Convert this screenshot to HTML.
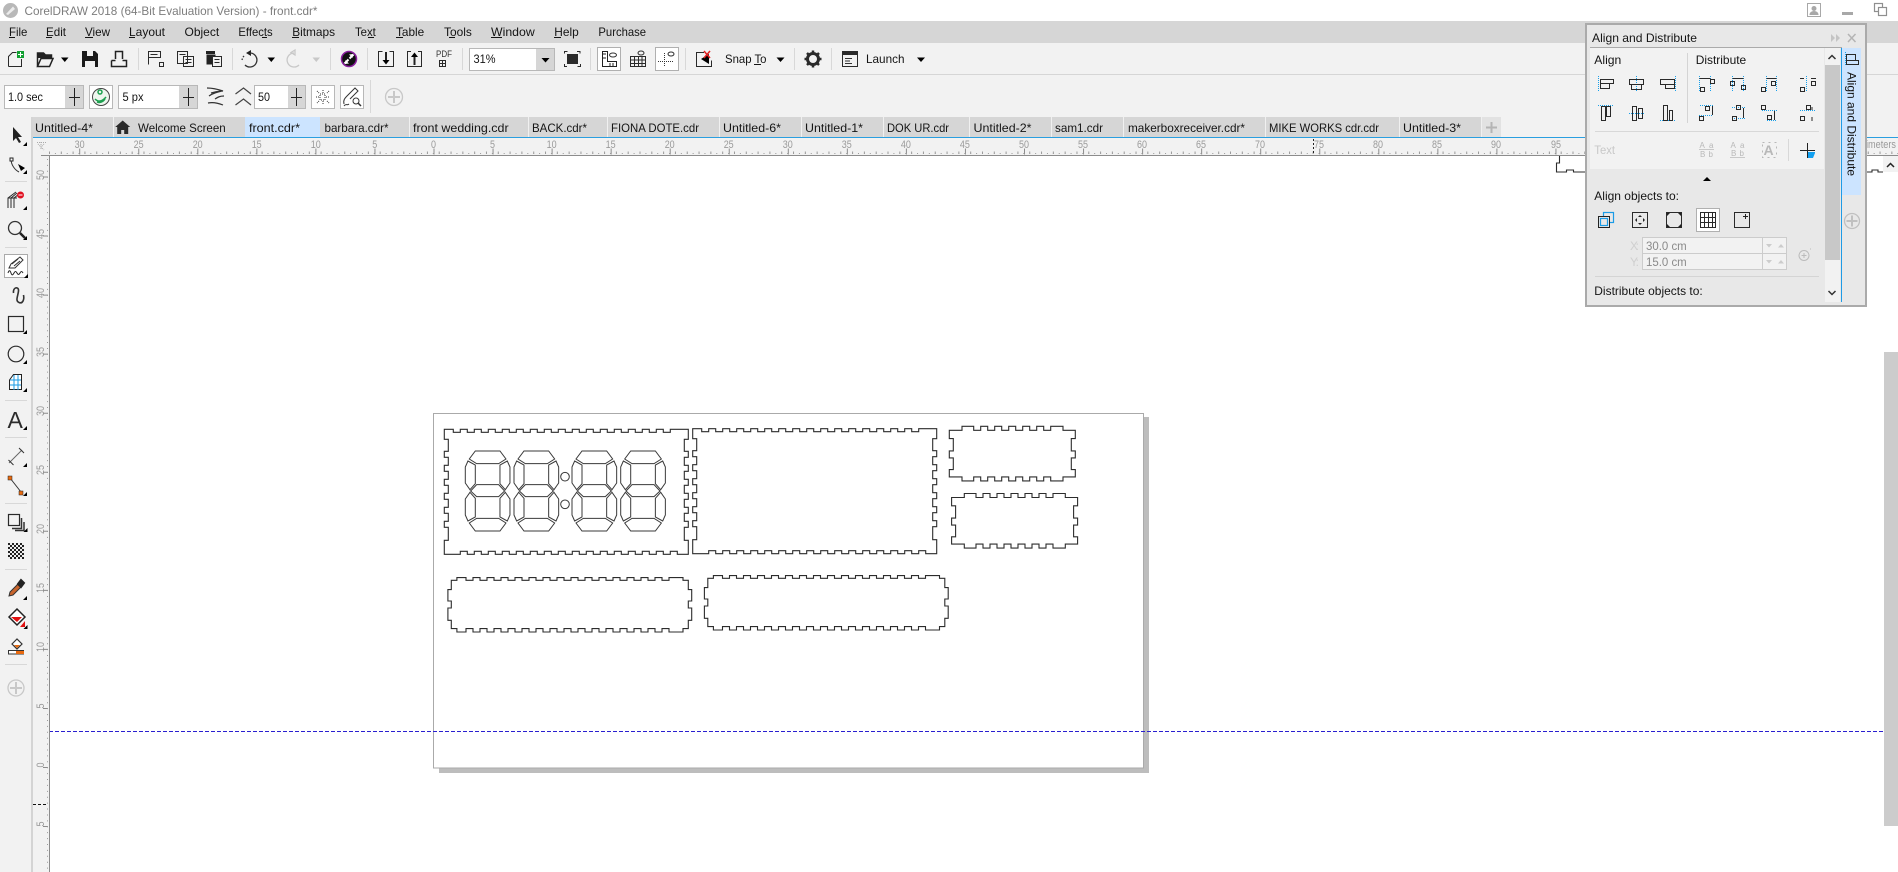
<!DOCTYPE html>
<html><head><meta charset="utf-8"><title>CorelDRAW</title>
<style>
html,body{margin:0;padding:0;background:#fff;overflow:hidden}
svg{display:block;position:absolute;left:0;top:0}
text{font-family:"Liberation Sans",sans-serif;font-size:12px;fill:#141414}
.g{fill:#9a9a9a;font-size:11px}
.k{fill:none;stroke:#2a2a2a;stroke-width:1}
.kk{fill:none;stroke:#222;stroke-width:1.5}
.b{stroke:#1aa0ea;stroke-width:1;stroke-dasharray:1 1;fill:none}
.c{fill:none;stroke:#2c2c2c;stroke-width:1.1}
.x{fill:none;stroke:#3a3a3a;stroke-width:1}
.f{fill:#000}
.l{fill:none;stroke:#bbb;stroke-width:1}
</style></head><body>
<svg width="1898" height="872" viewBox="0 0 1898 872" xmlns="http://www.w3.org/2000/svg">
<defs>
<g id="seg" transform="scale(.3333)" fill="none" stroke="#3a3a3a" stroke-width="3">
<path d="M30 0H104L122 24 100 38H34L12 24Z"/>
<path d="M8 30L30 42V98L14 116 0 96V48Z"/>
<path d="M126 30L104 42V98L120 116 134 96V48Z"/>
<path d="M34 101H100L118 120 100 137H34L16 120Z"/>
<path d="M14 124L30 142V198L8 210 0 192V144Z"/>
<path d="M120 124L104 142V198L126 210 134 192V144Z"/>
<path d="M34 202H100L122 216 104 240H30L12 216Z"/>
</g>
<path id="big" class="c" d="M444.3 429.3h9
v3h7v-3h7v3h7v-3h7v3h7v-3h7v3h7v-3h7
v3h7v-3h7v3h7v-3h7v3h7v-3h7v3h7v-3h7
v3h7v-3h7v3h7v-3h7v3h7v-3h7v3h7v-3h7
v3h7v-3h7v3h7v-3h7v3h7v-3h7v3h7v-3h7
h11v10h-4v12h4v6h-4v8h4v6h-4v8h4v6h-4v8h4v6h-4v8h4v6h-4v8h4v6h-4v13h4v14h-11
v-3h-7v3h-7v-3h-7v3h-7v-3h-7v3h-7v-3h-7v3h-7
v-3h-7v3h-7v-3h-7v3h-7v-3h-7v3h-7v-3h-7v3h-7
v-3h-7v3h-7v-3h-7v3h-7v-3h-7v3h-7v-3h-7v3h-7
v-3h-7v3h-7v-3h-7v3h-7v-3h-7v3h-7v-3h-7v3h-7
h-9v-14h4v-13h-4v-6h4v-8h-4v-6h4v-8h-4v-6h4v-8h-4v-6h4v-8h-4v-6h4v-8h-4v-6h4v-12h-4z"/>
<path id="small" class="c" d="M949.3 430.3h12.7v-4h11.7
v4h7v-4h7v4h7v-4h7v4h7v-4h7v4h7v-4h7v4h7v-4h7
v4h7v-4h12.3v4h12.3v8.3h-4v12.3h4v7h-4v11.7h4v7.3h-12.3v4h-12.3v-4h-7
v4h-7v-4h-7v4h-7v-4h-7v4h-7v-4h-7v4h-7v-4h-7v4h-7v-4h-7
v4h-11.7v-4h-12.7v-7.3h4v-11.7h-4v-7h4v-12.3h-4z"/>
<path id="wide" class="c" d="M451.3 580.3h5.6v-2.7h9.1
v2.7h7v-2.7h7v2.7h7v-2.7h7v2.7h7v-2.7h7v2.7h7v-2.7h7v2.7h7v-2.7h7v2.7h7v-2.7h7v2.7h7v-2.7h7
v2.7h7v-2.7h7v2.7h7v-2.7h7v2.7h7v-2.7h7v2.7h7v-2.7h7v2.7h7v-2.7h7v2.7h7v-2.7h7v2.7h7v-2.7h7
v2.7h7v-2.7h14v2.7h5.3v9.3h3.4v11.4h-3.4v7h3.4v12.3h-3.4v8.3h-5.3v3.4h-14v-3.4h-7
v3.4h-7v-3.4h-7v3.4h-7v-3.4h-7v3.4h-7v-3.4h-7v3.4h-7v-3.4h-7v3.4h-7v-3.4h-7v3.4h-7v-3.4h-7v3.4h-7v-3.4h-7
v3.4h-7v-3.4h-7v3.4h-7v-3.4h-7v3.4h-7v-3.4h-7v3.4h-7v-3.4h-7v3.4h-7v-3.4h-7v3.4h-7v-3.4h-7v3.4h-7v-3.4h-7
v3.4h-9.1v-3.4h-5.6v-8.3h-3.4v-12.3h3.4v-7h-3.4v-11.4h3.4z"/>
</defs>

<!-- base -->
<rect width="1898" height="872" fill="#fff"/>
<rect y="21" width="1898" height="22" fill="#d6d6d6"/>
<rect y="43" width="1898" height="95" fill="#f2f2f2"/>
<rect y="74" width="1898" height="1" fill="#d6d6d6"/>
<rect y="138" width="1898" height="17" fill="#f2f2f2"/>
<rect y="138" width="49" height="734" fill="#f2f2f2"/>
<rect x="0" y="117" width="32" height="755" fill="#f2f2f2"/>
<rect x="31" y="117" width="2" height="755" fill="#d4d4d4"/>

<!-- title bar -->
<circle cx="10.5" cy="10.5" r="7.5" fill="#b8b8b8"/><path d="M6 14L13 6.5 15 9 8 15z" fill="#ececec"/>
<text x="24.5" y="15" textLength="293" lengthAdjust="spacingAndGlyphs" style="fill:#7d7d7d">CorelDRAW 2018 (64-Bit Evaluation Version) - front.cdr*</text>
<g fill="none" stroke="#a8a8a8"><rect x="1807.5" y="3.5" width="13" height="13"/><circle cx="1814" cy="8.5" r="2" fill="#a8a8a8"/><path d="M1810 14.5c0-4 8-4 8 0z" fill="#a8a8a8"/></g>
<rect x="1842" y="12" width="11" height="3" fill="#a8a8a8"/>
<g fill="#fff" stroke="#8f8f8f" stroke-width="1.2"><rect x="1874.5" y="3.5" width="8" height="8"/><rect x="1878.5" y="7.5" width="8" height="8"/></g>

<!-- menu -->
<g>
<text x="9" y="36" textLength="18.4" lengthAdjust="spacingAndGlyphs">File</text>
<text x="46" y="36" textLength="20" lengthAdjust="spacingAndGlyphs">Edit</text>
<text x="85" y="36" textLength="25" lengthAdjust="spacingAndGlyphs">View</text>
<text x="129" y="36" textLength="36" lengthAdjust="spacingAndGlyphs">Layout</text>
<text x="184.5" y="36" textLength="34.7" lengthAdjust="spacingAndGlyphs">Object</text>
<text x="238.4" y="36" textLength="34.3" lengthAdjust="spacingAndGlyphs">Effects</text>
<text x="292.2" y="36" textLength="42.9" lengthAdjust="spacingAndGlyphs">Bitmaps</text>
<text x="355" y="36" textLength="20.8" lengthAdjust="spacingAndGlyphs">Text</text>
<text x="396" y="36" textLength="28.2" lengthAdjust="spacingAndGlyphs">Table</text>
<text x="444" y="36" textLength="27.8" lengthAdjust="spacingAndGlyphs">Tools</text>
<text x="491" y="36" textLength="43.7" lengthAdjust="spacingAndGlyphs">Window</text>
<text x="554.3" y="36" textLength="24.5" lengthAdjust="spacingAndGlyphs">Help</text>
<text x="598.4" y="36" textLength="47.7" lengthAdjust="spacingAndGlyphs">Purchase</text>
<path d="M9 37.5h6M46 37.5h6M85 37.5h8M129 37.5h6M262 37.5h5M292 37.5h7M368 37.5h6M396 37.5h7M449 37.5h6M491 37.5h11M554 37.5h7" stroke="#141414" fill="none"/>
</g>

<!-- toolbar 1 -->
<g>
<path class="k" d="M8.5 66.5V56.5l4-4h4M21.5 59v7.5h-13"/><rect x="17" y="51" width="7" height="7" fill="#12a032"/><path d="M20.5 52v5M18 54.5h5" stroke="#fff"/>
<path class="kk" d="M37.5 66.5V53h6l2 2h6v3M37.5 66.5h12l3.5-8H41z"/><path d="M38 53h6l2 2h5v3H38z" fill="#222"/>
<path class="f" d="M61 57.5h7.5l-3.7 4.500z"/>
<path d="M82 51h13l3 3v13H82z" fill="#1b1b1b"/><rect x="87" y="51" width="6" height="5" fill="#f2f2f2"/><rect x="85" y="61" width="10" height="6" fill="#f2f2f2"/>
<path class="kk" d="M115.500 59V51.500h7V59M111.500 60.500h4M122.500 60.500h4V66.500h-15v-6"/>
<rect x="138" y="48" width="1" height="22" fill="#d8d8d8"/>
<path class="k" d="M148.500 64.500v-13h12v6h-12M150.500 54.500h7"/><rect x="159.500" y="62.500" width="4" height="4" class="k"/>
<path class="k" d="M177.500 51.500h10v12h-10zM183.500 56.500h10v10h-10zM179.500 54.500h6M185.500 59.500h6M185.500 62.500h6"/>
<path d="M206 51h9v3h-9z" fill="#222"/><path d="M206.500 54.500h9v10h-9z" fill="#222"/><path class="k" d="M212.500 56.500h9v10h-9zM214.500 59.500h5M214.500 62.500h5" style="fill:#f2f2f2"/>
<rect x="232" y="48" width="1" height="22" fill="#d8d8d8"/>
<path d="M251 50l-5 3 5 3z" fill="#222"/><path d="M250 53a7 7 0 1 1-5 12" fill="none" stroke="#333" stroke-width="1.300"/><path d="M244 56a7 7 0 0 0-2 5" stroke="#333" stroke-dasharray="1.500 1.500" fill="none" stroke-width="1.300"/>
<path class="f" d="M267.500 57.500h7.500l-3.700 4.500z"/>
<path d="M295 50v5l-4-2.500zM294 53a7 7 0 1 0 5 12" fill="none" stroke="#c8c8c8" stroke-width="1.300"/>
<path d="M312.500 57.500h7.500l-3.700 4.500z" fill="#c8c8c8"/>
<rect x="330" y="48" width="1" height="22" fill="#d8d8d8"/>
<circle cx="349" cy="59" r="7.500" fill="#111" stroke="#8a1f9e" stroke-width="1.500"/><path d="M344.500 63.500l4-4M349.500 58.500l4-4" stroke="#fff" stroke-width="2"/><path d="M353 54l-.5 4-3.500-3.500zM345 64l.5-4 3.500 3.500z" fill="#fff"/>
<rect x="367" y="48" width="1" height="22" fill="#d8d8d8"/>
<path class="k" d="M382.500 51.500h-4v15h15v-15h-4"/><path d="M386 52v10" stroke="#222" stroke-width="2"/><path d="M382.500 60h7l-3.500 4.500z" class="f"/>
<path class="k" d="M411 51.500h-3.500v15h14v-15H418"/><path d="M414.500 55v10" stroke="#222" stroke-width="2"/><path d="M411 57h7l-3.500-4.500z" class="f"/>
<text x="436" y="57" textLength="16" lengthAdjust="spacingAndGlyphs" style="font-size:9px;fill:#333">PDF</text><path class="k" d="M439.500 60.500h6v6h-6zM442.500 60.500v6M439.500 63.500h6"/>
<rect x="462" y="48" width="1" height="22" fill="#d8d8d8"/>
<rect x="469.500" y="48.500" width="85" height="22" fill="#fff" stroke="#b8b8b8"/>
<rect x="536" y="49" width="18" height="21" fill="#d6d6d6"/>
<path class="f" d="M541.500 58h8l-4 4.500z"/>
<text x="473.500" y="63" textLength="22" lengthAdjust="spacingAndGlyphs">31%</text>
<path class="k" d="M564.500 53.500v-2h3M577 51.500h3v2M580.500 64v2.500h-3M567 66.500h-2.500V64"/><rect x="567" y="54" width="11" height="10" fill="#2a2a2a"/>
<rect x="590" y="48" width="1" height="22" fill="#d8d8d8"/>
<rect x="597.500" y="47.500" width="23" height="23" fill="#fff" stroke="#b0b0b0"/>
<path class="kk" style="stroke-width:1" d="M602.500 51.500v15h14v-5h-9v-10z"/><path d="M610 63v3M613 63v3M603 54h3M603 58h3" stroke="#222" fill="none"/><ellipse cx="613" cy="55" rx="3.500" ry="2" fill="none" stroke="#333"/>
<ellipse cx="641" cy="53" rx="3" ry="2" fill="none" stroke="#333"/>
<path class="k" d="M630.500 56.500h15v10h-15zM634.500 56.500v10M638.500 56.500v10M642 56.500v10M630.500 60h15M630.500 63.500h15"/>
<rect x="655.500" y="47.500" width="23" height="23" fill="#fff" stroke="#b0b0b0"/>
<path d="M664.500 53v14M658 61.500h15" stroke="#333" stroke-dasharray="1 1" fill="none"/><ellipse cx="671" cy="54" rx="3" ry="2" fill="none" stroke="#333"/>
<rect x="685" y="48" width="1" height="22" fill="#d8d8d8"/>
<path class="k" d="M704 52.500h-7.500v14h15v-6"/><path class="f" d="M709 54v10l-8-5z"/><path d="M703 52l6 7M709 52l-6 7" stroke="#e02020" stroke-width="1.500" transform="translate(1 -1)"/>
<text x="725" y="63" textLength="41.500" lengthAdjust="spacingAndGlyphs">Snap To</text><path d="M754 64.500h7" stroke="#141414"/>
<path class="f" d="M776.500 57.500h8l-4 4.500z"/>
<rect x="794" y="48" width="1" height="22" fill="#d8d8d8"/>
<circle cx="813" cy="59" r="5.500" fill="none" stroke="#2a2a2a" stroke-width="3"/><path d="M813 50.500v3M813 64.500v3M804.500 59h3M818.500 59h3M807 53l2 2M817 63l2 2M819 53l-2 2M809 63l-2 2" stroke="#2a2a2a" stroke-width="2.500"/>
<rect x="831" y="48" width="1" height="22" fill="#d8d8d8"/>
<rect x="842.500" y="51.500" width="15" height="15" class="k"/><rect x="843" y="52" width="14" height="3" fill="#2a2a2a"/><path d="M845 58.500h7M845 61h5M845 63.500h7" stroke="#333"/>
<text x="866" y="63" textLength="38.500" lengthAdjust="spacingAndGlyphs">Launch</text>
<path class="f" d="M917 57.500h8l-4 4.500z"/>
</g>

<!-- toolbar 2 -->
<g>
<rect x="4.500" y="85.500" width="79" height="23" fill="#fff" stroke="#b8b8b8"/><rect x="65" y="86" width="18" height="22" fill="#d6d6d6"/>
<path d="M74.500 88v18M69 97.500h11" stroke="#222"/>
<text x="8" y="101" textLength="35" lengthAdjust="spacingAndGlyphs">1.0 sec</text>
<rect x="89.500" y="85.500" width="23" height="23" fill="#fff" stroke="#b8b8b8"/>
<circle cx="101" cy="97" r="8.500" fill="#eef6ee" stroke="#444"/><path d="M95 99c3 3 7 3 11-2M97 102c3 1 6 0 8-3" stroke="#1ea050" fill="none" stroke-width="1.500"/><circle cx="100" cy="92" r="2" fill="none" stroke="#1ea050" stroke-width="1.500"/>
<rect x="118.500" y="85.500" width="79" height="23" fill="#fff" stroke="#b8b8b8"/><rect x="179" y="86" width="18" height="22" fill="#d6d6d6"/>
<path d="M188.500 88v18M183 97.500h11" stroke="#222"/>
<text x="122.500" y="101" textLength="21" lengthAdjust="spacingAndGlyphs">5 px</text>
<path d="M207 88c5 0 10 1 16 3-5 0-8 1-12 2M222 91c-5 1-9 2-13 5M224 96c-4 0-6 1-9 3M208 103c5-1 10 0 15 2" fill="none" stroke="#333" stroke-width="1.200"/>
<path d="M235.500 94l8-6 7.500 6M235.500 105l8-6 7.500 6" fill="none" stroke="#444" stroke-width="1.200"/>
<rect x="254.500" y="85.500" width="51" height="23" fill="#fff" stroke="#b8b8b8"/><rect x="288" y="86" width="17" height="22" fill="#d6d6d6"/>
<path d="M296.500 88v18M291 97.500h11" stroke="#222"/>
<text x="258" y="101" textLength="12" lengthAdjust="spacingAndGlyphs">50</text>
<rect x="311.500" y="85.500" width="23" height="23" fill="#fff" stroke="#b8b8b8"/>
<path d="M316 97h3M326 97h3M323 90v3M323 101v3M317 91l2 2M327 101l2 2M329 91l-2 2M319 101l-2 2M320 94h5v6h-5z" stroke="#333" stroke-dasharray="1 1" fill="none"/>
<rect x="340.500" y="85.500" width="23" height="23" fill="#fff" stroke="#b8b8b8"/>
<path d="M344 104c-1-4 1-6 3-8l8-8 3 3-8 8" fill="none" stroke="#333"/><path d="M344 106c2-3 3 0 5-2" fill="none" stroke="#333"/><circle cx="356" cy="101" r="3" fill="none" stroke="#333"/><path d="M358 103l3 3" stroke="#333" stroke-width="1.500"/>
<rect x="370" y="80" width="1" height="33" fill="#d8d8d8"/>
<circle cx="394" cy="97" r="8.500" fill="none" stroke="#c8c8c8" stroke-width="1.300"/><path d="M394 91v12M388 97h12" stroke="#c8c8c8" stroke-width="2"/>
</g>

<!-- tabs -->
<g>
<rect x="33" y="117" width="1448" height="20" fill="#d6d6d6"/>
<rect x="245" y="117" width="75" height="20" fill="#cce4ff"/>
<rect x="1482" y="117" width="19" height="20" fill="#e2e2e2"/>
<path d="M113.500 117v20M528.500 117v20M607.500 117v20M719.500 117v20M801.500 117v20M883.500 117v20M969.500 117v20M1051.500 117v20M1123.500 117v20M1265.500 117v20M1399.500 117v20M1481.500 117v20M409.500 117v20" stroke="#f0f0f0" fill="none"/>
<path d="M1491.500 122v11M1486 127.500h11" stroke="#b4b4b4" stroke-width="2"/>
<path d="M122.700 120.500l-7.500 6.500h2v7h4v-4h3v4h4v-7h2z" fill="#2a2a2a"/>
<text x="35" y="132" textLength="58" lengthAdjust="spacingAndGlyphs">Untitled-4*</text>
<text x="138" y="132" textLength="87.700" lengthAdjust="spacingAndGlyphs">Welcome Screen</text>
<text x="249" y="132" textLength="51" lengthAdjust="spacingAndGlyphs">front.cdr*</text>
<text x="324.500" y="132" textLength="64" lengthAdjust="spacingAndGlyphs">barbara.cdr*</text>
<text x="413" y="132" textLength="95.600" lengthAdjust="spacingAndGlyphs">front wedding.cdr</text>
<text x="532" y="132" textLength="55" lengthAdjust="spacingAndGlyphs">BACK.cdr*</text>
<text x="611" y="132" textLength="88" lengthAdjust="spacingAndGlyphs">FIONA DOTE.cdr</text>
<text x="723" y="132" textLength="58" lengthAdjust="spacingAndGlyphs">Untitled-6*</text>
<text x="805" y="132" textLength="58" lengthAdjust="spacingAndGlyphs">Untitled-1*</text>
<text x="887" y="132" textLength="62" lengthAdjust="spacingAndGlyphs">DOK UR.cdr</text>
<text x="973.500" y="132" textLength="58" lengthAdjust="spacingAndGlyphs">Untitled-2*</text>
<text x="1055" y="132" textLength="48" lengthAdjust="spacingAndGlyphs">sam1.cdr</text>
<text x="1128" y="132" textLength="117" lengthAdjust="spacingAndGlyphs">makerboxreceiver.cdr*</text>
<text x="1269" y="132" textLength="110" lengthAdjust="spacingAndGlyphs">MIKE WORKS cdr.cdr</text>
<text x="1403" y="132" textLength="58" lengthAdjust="spacingAndGlyphs">Untitled-3*</text>
<rect x="33" y="137" width="1865" height="1" fill="#2a9fe0"/>
</g>

<!-- canvas contents first -->
<rect x="49" y="155" width="1849" height="717" fill="#fff"/>
<rect x="439" y="768" width="710" height="5" fill="#bdbdbd"/>
<rect x="1143.500" y="417" width="5.500" height="356" fill="#bdbdbd"/>
<rect x="433.500" y="413.500" width="710" height="354.500" fill="#fff" stroke="#aaa"/>
<path d="M49 731.500H1883" stroke="#2a1fd0" stroke-dasharray="4 2" fill="none"/>

<use href="#big"/>
<use href="#big" x="248.400" y="-.6"/>
<use href="#small"/>
<use href="#small" x="2.300" y="67.200"/>
<use href="#wide"/>
<use href="#wide" x="256.500" y="-2"/>
<g>
<use href="#seg" x="465.300" y="451"/>
<use href="#seg" x="514" y="451"/>
<use href="#seg" x="572" y="451"/>
<use href="#seg" x="620.700" y="451"/>
</g>
<circle cx="565" cy="476.700" r="4.300" class="x"/><circle cx="565" cy="504.300" r="4.300" class="x"/>
<path d="M1559.500 155v8h-3v9h10v-2h7v2h12M1866 172h6v-2h6v2h5" class="c"/>

<!-- right scrollbar -->
<rect x="1883" y="155" width="15" height="17" fill="#f2f2f2"/>
<path d="M1887 167l3.500-3.500 3.500 3.500" fill="none" stroke="#222" stroke-width="1.500"/>
<rect x="1884" y="352" width="14" height="474" fill="#ccc"/>

<!-- h ruler -->
<g text-anchor="middle">
<text class="g" x="79.600" y="148" textLength="10" lengthAdjust="spacingAndGlyphs">30</text>
<text class="g" x="138.600" y="148" textLength="10" lengthAdjust="spacingAndGlyphs">25</text>
<text class="g" x="197.700" y="148" textLength="10" lengthAdjust="spacingAndGlyphs">20</text>
<text class="g" x="256.700" y="148" textLength="10" lengthAdjust="spacingAndGlyphs">15</text>
<text class="g" x="315.800" y="148" textLength="10" lengthAdjust="spacingAndGlyphs">10</text>
<text class="g" x="374.800" y="148" textLength="5" lengthAdjust="spacingAndGlyphs">5</text>
<text class="g" x="433.500" y="148" textLength="5" lengthAdjust="spacingAndGlyphs">0</text>
<text class="g" x="492.500" y="148" textLength="5" lengthAdjust="spacingAndGlyphs">5</text>
<text class="g" x="551.600" y="148" textLength="10" lengthAdjust="spacingAndGlyphs">10</text>
<text class="g" x="610.600" y="148" textLength="10" lengthAdjust="spacingAndGlyphs">15</text>
<text class="g" x="669.700" y="148" textLength="10" lengthAdjust="spacingAndGlyphs">20</text>
<text class="g" x="728.700" y="148" textLength="10" lengthAdjust="spacingAndGlyphs">25</text>
<text class="g" x="787.800" y="148" textLength="10" lengthAdjust="spacingAndGlyphs">30</text>
<text class="g" x="846.800" y="148" textLength="10" lengthAdjust="spacingAndGlyphs">35</text>
<text class="g" x="905.900" y="148" textLength="10" lengthAdjust="spacingAndGlyphs">40</text>
<text class="g" x="964.900" y="148" textLength="10" lengthAdjust="spacingAndGlyphs">45</text>
<text class="g" x="1024" y="148" textLength="10" lengthAdjust="spacingAndGlyphs">50</text>
<text class="g" x="1083" y="148" textLength="10" lengthAdjust="spacingAndGlyphs">55</text>
<text class="g" x="1142" y="148" textLength="10" lengthAdjust="spacingAndGlyphs">60</text>
<text class="g" x="1201" y="148" textLength="10" lengthAdjust="spacingAndGlyphs">65</text>
<text class="g" x="1260" y="148" textLength="10" lengthAdjust="spacingAndGlyphs">70</text>
<text class="g" x="1319" y="148" textLength="10" lengthAdjust="spacingAndGlyphs">75</text>
<text class="g" x="1378" y="148" textLength="10" lengthAdjust="spacingAndGlyphs">80</text>
<text class="g" x="1437" y="148" textLength="10" lengthAdjust="spacingAndGlyphs">85</text>
<text class="g" x="1496" y="148" textLength="10" lengthAdjust="spacingAndGlyphs">90</text>
<text class="g" x="1556" y="148" textLength="10" lengthAdjust="spacingAndGlyphs">95</text>
</g>
<text class="g" x="1866" y="148" textLength="30" lengthAdjust="spacingAndGlyphs">imeters</text>
<path d="M79.200 151.500H1898" stroke="#8c8c8c" stroke-width="6" stroke-dasharray="1 58.050" fill="none"/>
<path d="M49 153.500H1898" stroke="#9a9a9a" stroke-width="1" stroke-dasharray="1 4.905" fill="none"/>
<path d="M49 152.500H1898" stroke="#9a9a9a" stroke-width="2" stroke-dasharray="1 10.810" fill="none"/>
<path d="M1313.500 139v16" stroke="#222" stroke-dasharray="2 2" fill="none"/>
<rect x="41" y="155" width="1857" height="1" fill="#8c8c8c"/>

<!-- v ruler -->
<rect x="49" y="155" width="1" height="717" fill="#8c8c8c"/>
<g text-anchor="middle">
<text class="g" transform="translate(44 175) rotate(-90)" textLength="10" lengthAdjust="spacingAndGlyphs">50</text>
<text class="g" transform="translate(44 234) rotate(-90)" textLength="10" lengthAdjust="spacingAndGlyphs">45</text>
<text class="g" transform="translate(44 293) rotate(-90)" textLength="10" lengthAdjust="spacingAndGlyphs">40</text>
<text class="g" transform="translate(44 352) rotate(-90)" textLength="10" lengthAdjust="spacingAndGlyphs">35</text>
<text class="g" transform="translate(44 411) rotate(-90)" textLength="10" lengthAdjust="spacingAndGlyphs">30</text>
<text class="g" transform="translate(44 470) rotate(-90)" textLength="10" lengthAdjust="spacingAndGlyphs">25</text>
<text class="g" transform="translate(44 529) rotate(-90)" textLength="10" lengthAdjust="spacingAndGlyphs">20</text>
<text class="g" transform="translate(44 588) rotate(-90)" textLength="10" lengthAdjust="spacingAndGlyphs">15</text>
<text class="g" transform="translate(44 647) rotate(-90)" textLength="10" lengthAdjust="spacingAndGlyphs">10</text>
<text class="g" transform="translate(44 706) rotate(-90)" textLength="5" lengthAdjust="spacingAndGlyphs">5</text>
<text class="g" transform="translate(44 765) rotate(-90)" textLength="5" lengthAdjust="spacingAndGlyphs">0</text>
<text class="g" transform="translate(44 824) rotate(-90)" textLength="5" lengthAdjust="spacingAndGlyphs">5</text>
</g>
<path d="M45.500 176.500V872" stroke="#8c8c8c" stroke-width="5" stroke-dasharray="1 58.050" fill="none"/>
<path d="M47.500 159V872" stroke="#9a9a9a" stroke-dasharray="1 4.905" fill="none"/>
<path d="M33 804.500h15" stroke="#111" stroke-dasharray="3 2" fill="none"/>
<path d="M37 142.500h9M41 142v8M38 144l6 6M44 144l-3 3" stroke="#aaa" stroke-dasharray="1 1" fill="none"/>

<!-- toolbox -->
<g>
<path d="M13 127v14l3-3 3 5 2-1-3-5h4z" fill="#222"/><path class="f" d="M27 142v4h-4z"/>
<path d="M11 159c0 6 4 11 8 13" fill="none" stroke="#333"/><rect x="10" y="158" width="3" height="3" fill="#fff" stroke="#222"/><path class="f" d="M18 164l7 4-4 3z"/><path class="f" d="M27 170v4h-4z"/>
<rect x="5" y="181" width="22" height="1" fill="#d8d8d8"/>
<path class="k" d="M8 208v-10l8-6M11 208v-10l6-5M14 208v-10l5-4M8 198h9"/><circle cx="20.500" cy="195" r="3.500" fill="#e01020"/><path d="M18.500 195h4" stroke="#fff"/><path class="f" d="M27 206v4h-4z"/>
<circle cx="15" cy="228" r="6.500" fill="none" stroke="#333" stroke-width="1.300"/><path d="M20 233l5 5" stroke="#222" stroke-width="2.500"/><path class="f" d="M27 236v4h-4z"/>
<rect x="5" y="247" width="22" height="1" fill="#d8d8d8"/>
<rect x="4.500" y="254.500" width="23" height="23" fill="#fff" stroke="#aaa"/>
<path d="M9 268l2-4 9-7 3 3-8 8z" fill="none" stroke="#333"/><path d="M12 264l6-5M14 266l6-5" stroke="#333"/><path d="M8 273c1-3 2-3 3 0s2 2 3 0 2-2 3 0 2 2 3 0 2-2 3 0" fill="none" stroke="#222"/><path class="f" d="M28 274v4h-4z"/>
<path d="M13.500 293C12.500 287 19 286 18.500 291C18 296 15 301 19 302.500C22.500 304 24.500 300 23.500 295" fill="none" stroke="#333" stroke-width="1.600"/>
<rect x="8.500" y="316.500" width="15" height="15" class="k" style="stroke-width:1.200"/><path class="f" d="M27 330v4h-4z"/>
<circle cx="16" cy="354" r="7.800" class="k" style="stroke-width:1.200"/><path class="f" d="M27 360v4h-4z"/>
<path d="M9.500 380l4-5.500h8v15h-12z" fill="#fff" stroke="#222"/><path d="M10 380h11M10 385h11M14 375v15M18 375v15" stroke="#1a9be6"/><path class="f" d="M27 388v4h-4z"/>
<rect x="5" y="400" width="22" height="1" fill="#d8d8d8"/>
<text x="7.500" y="428" style="font-size:23px;fill:#2c2c2c">A</text><path class="f" d="M27 426v4h-4z"/>
<rect x="5" y="437" width="22" height="1" fill="#d8d8d8"/>
<path d="M9 463l13-13" stroke="#666"/><path d="M8.500 460l5 5M19 448l5 5" stroke="#333"/><path class="f" d="M27 463v4h-4z"/>
<path d="M10 478l11 14" stroke="#333"/><rect x="8" y="476" width="4" height="4" fill="#e86a10" stroke="#222" stroke-width=".5"/><rect x="19" y="491" width="4" height="4" fill="#e86a10" stroke="#222" stroke-width=".5"/><path class="f" d="M27 492v4h-4z"/>
<rect x="5" y="503" width="22" height="1" fill="#d8d8d8"/>
<rect x="8.500" y="514.500" width="11" height="11" class="k" style="stroke-width:1.200"/><path d="M21.500 518v10.500H12M24 522v8.500h-9" fill="none" stroke="#333" stroke-width="1.500"/><path class="f" d="M27.500 528v4h-4z"/>
<rect x="8" y="543" width="16" height="16" fill="#222"/>
<path d="M10 543h2v2h-2zM14 543h2v2h-2zM18 543h2v2h-2zM22 543h2v2h-2zM8 545h2v2H8zM12 545h2v2h-2zM16 545h2v2h-2zM20 545h2v2h-2zM10 547h2v2h-2zM14 547h2v2h-2zM18 547h2v2h-2zM22 547h2v2h-2zM8 549h2v2H8zM12 549h2v2h-2zM16 549h2v2h-2zM20 549h2v2h-2zM10 551h2v2h-2zM14 551h2v2h-2zM18 551h2v2h-2zM22 551h2v2h-2zM8 553h2v2H8zM12 553h2v2h-2zM16 553h2v2h-2zM20 553h2v2h-2zM10 555h2v2h-2zM14 555h2v2h-2zM18 555h2v2h-2zM22 555h2v2h-2zM8 557h2v2H8zM12 557h2v2h-2zM16 557h2v2h-2zM20 557h2v2h-2z" fill="#eee"/>
<rect x="5" y="569" width="22" height="1" fill="#d8d8d8"/>
<path d="M9 596l1-4 9-9 3 3-9 9z" fill="#c8642c" stroke="#333"/><path d="M18 584l3-4 3 3-3 4z" fill="#222" stroke="#222" stroke-width="2"/><path class="f" d="M27 596v4h-4z"/>
<path d="M9 617l8-8 8 8-8 8z" fill="#fff" stroke="#222" stroke-width="1.500"/><path d="M11 617h11l-5 5z" fill="#e01010"/><path d="M20 627l5-6v6z" fill="#e01010"/><path class="f" d="M27.500 625v4h-4z"/>
<path d="M12 644l5-5 5 5-5 5z" fill="#fff" stroke="#333" stroke-width="1.200"/><path d="M14 645h6l-3 3z" fill="#e86a10"/><rect x="8.500" y="650.500" width="15" height="3.500" fill="#fff" stroke="#333"/><rect x="16" y="651" width="8" height="3" fill="#e86a10"/>
<rect x="5" y="664" width="22" height="1" fill="#d8d8d8"/>
<circle cx="16" cy="688" r="8" fill="none" stroke="#c8c8c8" stroke-width="1.300"/><path d="M16 682v12M10 688h12" stroke="#c8c8c8" stroke-width="2"/>
</g>

<!-- docker panel -->
<g>
<rect x="1586" y="24" width="280" height="282" fill="#e8e8e8" stroke="#aaa" stroke-width="2"/>
<text x="1592" y="42" textLength="105" lengthAdjust="spacingAndGlyphs">Align and Distribute</text>
<path d="M1831 34v8l4-4zM1836 34v8l4-4z" fill="#c4c4c4"/>
<path d="M1848 34l7.500 8M1855.500 34l-7.500 8" stroke="#b4b4b4" stroke-width="1.500"/>
<rect x="1590" y="47" width="252" height="1" fill="#aaa"/>
<rect x="1590" y="48" width="234" height="121" fill="#f2f2f2"/>
<rect x="1825" y="48" width="15" height="254" fill="#f2f2f2"/>
<rect x="1825" y="65" width="15" height="195" fill="#c8c8c8"/>
<path d="M1828.500 59l3.500-3.500 3.500 3.500" fill="none" stroke="#333" stroke-width="1.500"/>
<path d="M1828.500 291l3.500 3.500 3.500-3.500" fill="none" stroke="#333" stroke-width="1.500"/>
<rect x="1841" y="48" width="1" height="254" fill="#1f9be6"/>
<rect x="1842" y="48" width="19" height="147" fill="#cce4ff"/>
<path d="M1846.500 54.500h9v6h-9zM1846.500 60.500h12v4h-12z" class="k"/><path d="M1845.500 52v14" class="b"/>
<text transform="translate(1847.500 72) rotate(90)" textLength="104" lengthAdjust="spacingAndGlyphs">Align and Distribute</text>
<circle cx="1852" cy="221" r="7.500" fill="none" stroke="#c0c0c0" stroke-width="1.300"/><path d="M1852 215.500v11M1846.500 221h11" stroke="#c0c0c0" stroke-width="2"/>

<text x="1594.300" y="64" textLength="27" lengthAdjust="spacingAndGlyphs">Align</text>
<text x="1695.700" y="64" textLength="50.500" lengthAdjust="spacingAndGlyphs">Distribute</text>
<rect x="1687" y="53" width="1" height="70" fill="#d4d4d4"/>

<path class="b" d="M1598.500 76v16M1636.500 76v16M1675.500 76v16M1598 105.500h16M1629 113.500h16M1660 120.500h16"/>
<path class="k" d="M1600.500 79.500h13v4h-13zM1600.500 83.500h9v5h-9zM1629.500 79.500h14v5h-14zM1631.500 84.500h10v5h-10zM1660.500 79.500h14v5h-14zM1665.500 84.500h9v4h-9zM1601.500 106.500h4v14h-4zM1606.500 106.500h4v10h-4zM1632.500 106.500h4v14h-4zM1638.500 108.500h4v10h-4zM1663.500 105.500h4v15h-4zM1669.500 110.500h3v10h-3z"/>
<path class="b" d="M1699.500 76v16M1710.500 76v16M1732.500 76v16M1743.500 76v16M1766.500 76v16M1776.500 76v16M1806.500 76v16"/>
<path class="k" d="M1699.500 78.500h11M1732.500 78.500h11M1766.500 78.500h10M1800 78.500h4M1811 78.500h5"/>
<path class="k" d="M1710.500 79.500h4v4h-4zM1700.500 87.500h4v4h-4zM1730.500 81.500h4v4h-4zM1741.500 85.500h4v4h-4zM1771.500 81.500h4v4h-4zM1761.500 87.500h4v4h-4zM1811.500 81.500h4v4h-4zM1800.500 87.500h4v4h-4z"/>
<path class="b" d="M1700 105.500h14M1699 115.500h14M1732 107.500h13M1732 118.500h13M1762 110.500h15M1767 120.500h10M1800 110.500h16"/>
<path class="k" d="M1712.500 106v9M1743.500 108v10M1774.500 111v9M1812 107v3M1812 117v4M1800 116.500h4"/>
<path class="k" d="M1705.500 106.500h4v4h-4zM1699.500 116.500h4v4h-4zM1736.500 105.500h4v4h-4zM1732.500 116.500h4v4h-4zM1761.500 105.500h4v4h-4zM1767.500 115.500h4v4h-4zM1806.500 105.500h4v4h-4zM1800.500 116.500h4v4h-4z"/>

<rect x="1595" y="131" width="224" height="1" fill="#d8d8d8"/>
<text x="1594.300" y="154" textLength="20.700" lengthAdjust="spacingAndGlyphs" style="fill:#c8c8c8">Text</text>
<text x="1699.500" y="148" textLength="14" style="font-size:8px;fill:#b8b8b8">Aa</text><text x="1700" y="157" textLength="13" style="font-size:8px;fill:#b8b8b8">Bb</text><rect x="1699" y="149" width="15" height="1" fill="#c8c8c8"/>
<text x="1730.500" y="148" textLength="14" style="font-size:8px;fill:#b8b8b8">Aa</text><text x="1731" y="156" textLength="13" style="font-size:8px;fill:#b8b8b8">Bb</text><rect x="1730" y="157" width="15" height="1" fill="#c8c8c8"/>
<text x="1763.500" y="155" style="font-size:14px;font-weight:bold;fill:#b8b8b8">A</text>
<rect x="1762.500" y="142.500" width="14" height="15" fill="none" stroke="#b8b8b8" stroke-dasharray="2 4"/>
<rect x="1788" y="139" width="1" height="22" fill="#d8d8d8"/>
<path d="M1807.500 143v15M1800 150.500h15" stroke="#222"/><path d="M1808 152h7v1l-2 5h-5z" fill="#12a0f0"/>
<path class="f" d="M1703 181h8l-4-4z"/>

<text x="1594.300" y="200" textLength="84.700" lengthAdjust="spacingAndGlyphs">Align objects to:</text>
<rect x="1603.500" y="212.500" width="10" height="10" fill="none" stroke="#1a9be6" stroke-width="1.200"/>
<rect x="1598.500" y="216.500" width="11" height="11" fill="#e8e8e8" stroke="#222"/><rect x="1600.500" y="218.500" width="7" height="7" fill="none" stroke="#1a9be6" stroke-width="1.200"/>
<rect x="1632.500" y="212.500" width="15" height="15" class="k"/><path d="M1640 215l-2 2h4zM1640 225l-2-2h4zM1635 220l2-2v4zM1645 220l-2-2v4z" fill="#222"/>
<rect x="1666.500" y="212.500" width="15" height="15" class="k"/><path d="M1667 213h3l-3 3zM1681 213h-3l3 3zM1667 227h3l-3-3zM1681 227h-3l3-3z" fill="#222"/>
<rect x="1696.500" y="208.500" width="23" height="23" fill="#fff" stroke="#b0b0b0"/>
<path class="k" d="M1700.500 212.500h15v15h-15zM1704.500 212.500v15M1708.500 212.500v15M1712.500 212.500v15M1700.500 217.500h15M1700.500 222.500h15"/>
<rect x="1734.500" y="212.500" width="15" height="15" class="k"/><path d="M1745.500 214v5M1743 216.500h5" stroke="#222"/>

<text x="1630" y="250" textLength="9" style="fill:#cfcfcf">X:</text>
<text x="1630" y="266" textLength="9" style="fill:#cfcfcf">Y:</text>
<rect x="1642.500" y="237.500" width="144" height="32" fill="#f2f2f2" stroke="#ccc"/>
<path d="M1643 253.500h144M1762.500 238v31" stroke="#ccc"/>
<text x="1646" y="250" textLength="40.700" lengthAdjust="spacingAndGlyphs" style="fill:#8a8a8a">30.0 cm</text>
<text x="1646" y="266" textLength="40.700" lengthAdjust="spacingAndGlyphs" style="fill:#8a8a8a">15.0 cm</text>
<path d="M1766 244h6l-3 3.500zM1778 247.500h6l-3-3.500zM1766 260h6l-3 3.500zM1778 263.500h6l-3-3.500z" fill="#ccc"/>
<circle cx="1804" cy="255.500" r="5" class="l"/><path d="M1804 253v5M1801.500 255.500h5M1810 249h1" stroke="#bbb"/>
<rect x="1595" y="276" width="224" height="1" fill="#d4d4d4"/>
<text x="1594.300" y="295" textLength="108.400" lengthAdjust="spacingAndGlyphs">Distribute objects to:</text>
</g>
</svg>
</body></html>
